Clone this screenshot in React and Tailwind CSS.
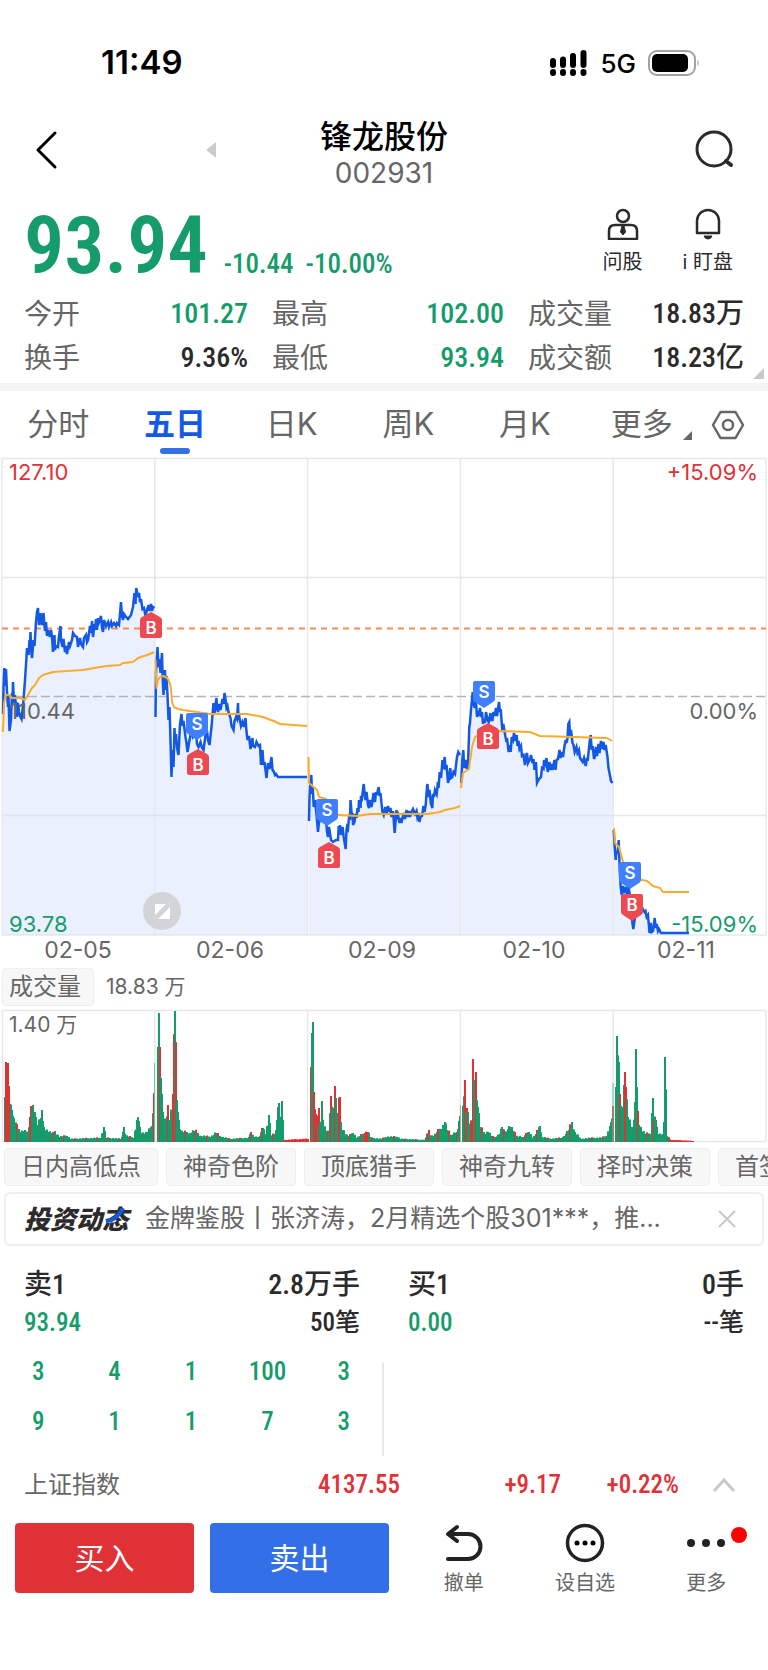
import React from 'react';

const NUM = "font-['Roboto_Condensed','Roboto','Noto_Sans_CJK_SC',sans-serif]";

const stats = [
	{ label: '今开', value: '101.27', color: 'text-[#159c6a]' },
	{ label: '最高', value: '102.00', color: 'text-[#159c6a]' },
	{ label: '成交量', value: '18.83万', color: 'text-[#2b2b2b]' },
	{ label: '换手', value: '9.36%', color: 'text-[#2b2b2b]' },
	{ label: '最低', value: '93.94', color: 'text-[#159c6a]' },
	{ label: '成交额', value: '18.23亿', color: 'text-[#2b2b2b]' },
];

const tabs = ['分时', '五日', '日K', '周K', '月K', '更多'];
const tags = ['日内高低点', '神奇色阶', '顶底猎手', '神奇九转', '择时决策', '首签信号'];
const dates = ['02-05', '02-06', '02-09', '02-10', '02-11'];
const sellQueue = [3, 4, 1, 100, 3, 9, 1, 1, 7, 3];

// one polyline per trading day, flat "x y" pairs
const prices = [
	'3 258 3.5 232 4.3 212 5 230 6 213 7 236 8 251 8.5 240 9.5 275 11 264 12 237 12.5 246 13 226 14 247 15 239 16 252 16.5 246 17 261 18 247 19 256 20 260 21.5 263 22.5 254 23.5 244 25 224 26.3 204 27 192 28.5 199 29.5 184 30 190 30.5 176 31.3 196 32 202 33.5 184 34.5 190 36 166 37 156 38 152 39 169 40.5 157 41 165 42 169 43.5 157 44.5 170 45 175 46 166 47 180 48 174 50 181 51 174 52 181 53 196 54.5 179 55 194 56 190 58 191 59 180 60.5 170 61 184 62.5 191 63.5 183 65 196 66 190 67 198 69 186 70 190 72 184 73 177 75 180 77 181 78 191 80 182 81 188 83 191 84 182 86 179 87 186 88 184 90 170 91 177 92 165 93 181 94.5 168 95 174 96 163 97 174 98 162 99 166 101 160 102 172 103 176 104 164 106 170 108 166 109 171 111 166 112 170 114 167 116 170 117 167 119 169 120 158 121 146 122 160 123 164 124 158 126 161 128 163 131 159 133 151 134.5 137 135.5 148 136.3 132 138 141 139 137 140 146 141 143 142.5 153 144 152 145.5 160 147 154 148.5 149 149.5 155 151 148 152 155 153 151 154.5 152',
	'155.5 261 156 217 157.5 191 158.5 211 159.5 203 160.5 217 162 197 162.5 218 163.5 239 165 214 165.5 234 166.5 220 167.5 239 168.5 264 169.5 251 170.5 284 171.5 321 172.5 294 173.5 311 174.5 272 175 286 176 278 177 292 178.5 299 180 268 181.5 258 182.5 270 183.5 265 185.5 281 186.5 287 187.5 296 189.5 284 191.5 274 193 281 196 277 197 288 198.5 291 200.5 286 202 292 203.5 294 205.5 279 207 275 208 284 209.5 289 211.5 271 213.5 247 214.5 257 216.5 242 217 251 218 256 219.5 248 220.5 254 222.5 243 223.5 248 224.5 237 225.5 243 226.5 252 227.5 250 228.5 256 230.5 262 231.5 270 233.5 274 234.5 265 236 261 237 263 238 247 238.5 264 239.5 262 241 270 242.5 266 244 271 245.5 262 246.5 276 247.5 284 249 280 250.5 293 252.5 282 253 290 255 291 256.5 286 258.5 290 260 289 261 309 262.5 294 263.5 309 264.5 306 266.5 322 268 307 269.5 313 271.5 301 272.5 314 273.5 315 275 319 276 318 278 321 307 321',
	'309 365 309.5 342 310 331 311.3 319 312 338 312.7 330 313.7 351 315 344 316.7 361 318 376 319.5 361 321 366 324 352 326 361 327 376 328 381 329 371 331 384 333 386 336 384 338 384 338.7 370 339.5 376 340 369 341 379 342.5 371 343.7 381 345.7 393 346.5 374 347 371 348 373 349 362 350 364 350.5 344 352 361 352.5 357 353 369 354.5 366 355.5 358 356.5 362 357.5 352 358.5 356 359 344 360.5 352 361 340 362 342 363.7 328 364.5 336 365.5 344 366.5 336 368 349 369 352 370 344 371.5 351 372.5 345 373.5 337 375 346 376 336 376.7 339 378.7 331 379.5 340 380.5 337 381.7 349 382.5 356 383.7 359 385.3 351 386.5 358 388 350 389.5 356 390.5 352 391.5 361 393 355 394.7 377 396.5 354 397 361 398 359 399.5 367 400.5 362 401.5 367 402.7 361 404 357 405 363 406.5 354 407.5 361 409 355 410 361 411.5 356 413 353 415 358 416.5 355 417.5 362 418.5 360 419.5 366 420.5 361 422 360 423.5 350 424.5 356 425.7 349 427 331 427.5 328 428.5 341 429.5 334 431 348 432.3 352 433 338 434 341 435 334 436.7 338 438 326 438.5 332 439.7 316 441 322 442.5 304 443.3 313 444.7 301 445.5 312 446.7 311 448 327 448.7 324 450.3 312 451 322 452.3 321 453.5 316 455 318 457 301 458.3 296 460 299',
	'461.3 327 462.3 304 463.3 294 464 309 464.7 312 466 304 467 313 468 309 469.3 271 470 267 470.7 257 472.7 236 473.7 248 474.7 252 476 246 477 261 478 255 479 260 480 252 481 261 482 256 483 268 484.5 263 485 267 486 256 487.5 264 488.7 266 490.5 257 491 264 492.5 264 493.5 256 494.7 260 496 252 497 260 499 246 500 256 500.7 253 502.3 274 503.3 268 504.3 274 505.5 281 506.5 286 507 282 508.7 296 510 289 510.7 296 511.7 281 513 284 514 277 515 285 516.7 279 517.5 290 518.5 285 519.5 293 521 290 522 300 523.5 299 525 309 526 300 527 297 528 307 530 303 531 299 532.5 307 533.5 303 534.5 314 536 306 537 327 539 323 541 321 542 312 543.5 313 544 304 545.5 308 546.5 302 547.7 316 549.5 306 550.5 314 551.7 308 552.5 314 554.5 304 555.5 314 556.5 304 558 303 559.5 294 560.5 302 561.7 296 563 301 564.5 290 565.7 284 566.5 287 567.5 282 568.3 268 569.3 266 570 280 571 274 572.5 287 573.5 289 574.7 296 576.5 291 577.5 297 579 294 580 302 582.7 306 584 302 585.7 310 587 302 587.7 305 589.5 287 590.7 279 591.7 294 592.7 290 594 303 595 300 596 291 597 300 598.5 288 599.5 297 601 285 602 293 603.5 286 604.5 294 605.7 289 607.5 301 608.5 312 609.5 317 611 325 612.5 327',
	'613.7 374 614.7 391 615.7 404 616.5 395 617.5 398 618.7 384 619.7 414 620.7 431 621.7 439 623 430 624 437 626 431 627 438 628.5 431 630.7 444 632 464 633.3 473 635 461 638 457 641.7 451 644.5 456 645.5 455 646.7 461 648 459 649.5 477 650.7 467 651.7 476 653 475 654.7 462 655.7 472 656.7 468 658 475 659 473 661 477 689 477',
];

const averages = [
	'3 276 4 247 6 239 9 239 12 242 20 242 25 244 28 239 32 232 35 229 39 222 43 219 53 216 67 215 83 214 100 211 107 210 120 209 123 207 133 206 138 202 150 198 154 196',
	'155.5 204 156.5 232 158 224 160 221 163 220 167.5 222 170.5 229 172 246 174 251 178 253 183 254 190 255 210 258 247 258 263 261 268 263 274 265 280 268 307 270',
	'308.5 301 309 327 312.5 330 317 334 319 341 326 343 330 354 339 359 357 360 370 358 427 358 440 356 445 354 455 352 460 350',
	'461 332 463 317 469 313 472 291 475 281 480 278 500 275 530 276 540 280 607 282 612 285',
	'614 372 615 387 619 391 623 406 630 417 642 424 647 425 653 430 660 432 663 436 689 436',
];

// [x, height, red?]
const volumes = [
	[[4, 45], [5, 80, 1], [7, 79, 1], [8, 56, 1], [9, 38, 1], [11, 32], [13, 24], [16, 18, 1], [19, 10], [24, 12], [27, 10], [29, 25, 1], [30, 36, 1], [32, 37], [34, 30], [36, 15], [40, 24], [41, 32], [43, 15], [47, 10], [53, 8], [54, 11], [58, 5], [66, 6], [70, 3], [100, 4], [103, 15], [105, 4], [120, 3], [123, 15], [125, 6], [133, 4], [136, 22], [138, 21], [140, 9], [146, 9], [151, 16], [153, 49, 1]],
	[[157, 95], [158, 129], [159, 95, 1], [160, 64], [162, 30], [165, 18], [167, 37, 1], [169, 18], [172, 48, 1], [174, 131], [175, 100, 1], [176, 42], [178, 22], [180, 10], [189, 9], [194, 11], [200, 6], [210, 5], [215, 9], [220, 5], [230, 3], [247, 4], [250, 10, 1], [253, 5], [258, 5], [262, 14], [265, 8], [268, 27], [270, 6], [274, 8], [278, 39], [280, 13], [281, 41], [283, 2, 1], [307, 3, 1]],
	[[310, 75, 1], [311, 109], [312, 120], [313, 50, 1], [315, 28, 1], [317, 16], [318, 34, 1], [320, 20], [321, 41], [323, 15], [328, 8], [330, 46, 1], [332, 30], [334, 56, 1], [336, 20], [339, 45, 1], [340, 20], [342, 12], [347, 5], [352, 9], [356, 4], [364, 9, 1], [367, 10, 1], [370, 4], [380, 3], [386, 5], [396, 5], [400, 3], [424, 2], [428, 12, 1], [430, 6], [433, 6], [438, 12, 1], [441, 13], [444, 20], [446, 12], [450, 7], [456, 10, 1], [459, 26]],
	[[462, 36], [464, 62, 1], [465, 30], [466, 34, 1], [468, 18], [471, 18, 1], [472, 83, 1], [473, 62], [475, 70, 1], [477, 35], [479, 15], [484, 8], [487, 10], [493, 4], [499, 8], [501, 15], [504, 8], [508, 16], [511, 15], [515, 6], [522, 5], [528, 10], [532, 4], [535, 8], [539, 16], [541, 5], [550, 3], [560, 4], [563, 6], [568, 12], [571, 20], [574, 10], [580, 3], [590, 4], [600, 4], [606, 6], [610, 20], [612, 36, 1]],
	[[615, 55], [616, 106], [618, 80], [619, 48, 1], [621, 26], [623, 57], [624, 70, 1], [625, 55, 1], [627, 25], [632, 13], [634, 40], [635, 93], [637, 31, 1], [639, 15], [644, 8], [650, 8], [652, 44], [653, 22, 1], [655, 22], [657, 8], [662, 8], [663, 20], [664, 85], [666, 6], [670, 2, 1], [692, 1, 1]],
];

function volumeBars(day) {
	const bars = [];
	for (let i = 0; i < day.length - 1; i++) {
		const [x0, h0, red0] = day[i];
		const [x1, h1, red1] = day[i + 1];
		bars.push([x0, h0, red0]);
		for (let x = x0 + 1; x < x1; x++) {
			const noise = ((x * 37) % 11) / 11;
			const h = (h0 + ((h1 - h0) * (x - x0)) / (x1 - x0)) * (0.75 + noise * 0.5);
			bars.push([x, h, (red0 && red1) || noise > 0.85]);
		}
	}
	bars.push(day[day.length - 1]);
	return bars;
}

function Marker({ x, y, type, down }) {
	return (
		<g transform={`translate(${x} ${y})`}>
			<path
				d={down ? 'M-9 0H9Q11 0 11 2V18Q11 20 9 21L0 27L-9 21Q-11 20 -11 18V2Q-11 0 -9 0Z' : 'M0 0L9 5Q11 6 11 8V24Q11 26 9 26H-9Q-11 26 -11 24V8Q-11 6 -9 5Z'}
				fill={type === 'S' ? '#4080ff' : '#ec4a50'}
			/>
			<text x="0" y={down ? 17 : 22} textAnchor="middle" fontSize="17" fontWeight="600" fill="#fff">
				{type}
			</text>
		</g>
	);
}

function PriceChart() {
	return (
		<svg viewBox="0 0 768 508" className="block h-auto w-full">
			{prices.map((line, index) => {
				const points = line.split(' ');
				return (
					<polygon key={index} points={`${points[0]} 479 ${line} ${points[points.length - 2]} 479`} fill="#eaf0fd" />
				);
			})}
			<g stroke="#dcdee3" strokeOpacity="0.7" strokeWidth="1.5" fill="none">
				<path d="M2 2.5H766V479H2Z M2 121.5H766 M2 359.5H766" />
				<path d="M154.8 2V479 M307.6 2V479 M460.4 2V479 M613.2 2V479" />
			</g>
			<path d="M2 240.5H766" stroke="#b4b4b4" strokeWidth="1.5" strokeDasharray="9 4" />
			<path d="M2 172.5H766" stroke="#fa8a52" strokeWidth="2" strokeDasharray="6 5" />
			{prices.map((line, index) => (
				<polyline key={index} points={line} fill="none" stroke="#1459e6" strokeWidth="2.5" />
			))}
			{averages.map((line, index) => (
				<polyline key={index} points={line} fill="none" stroke="#fbab2c" strokeWidth="2" strokeLinejoin="round" />
			))}
			<Marker x={151} y={156} type="B" />
			<Marker x={197} y={257} type="S" down />
			<Marker x={198} y={293} type="B" />
			<Marker x={327} y={343} type="S" down />
			<Marker x={329} y={386} type="B" />
			<Marker x={484} y={225} type="S" down />
			<Marker x={488} y={267} type="B" />
			<Marker x={630} y={406} type="S" down />
			<Marker x={632} y={438} type="B" down />
			<circle cx="162" cy="455" r="19" fill="#d3d4d8" />
			<path d="M155 448H166L155 459Z M170 451V463H158Z" fill="#fff" />
			<g fontSize="22">
				<text x="9" y="24" fill="#e03136">127.10</text>
				<text x="758" y="24" fill="#e03136" textAnchor="end">+15.09%</text>
				<text x="9" y="263" fill="#666">110.44</text>
				<text x="758" y="263" fill="#666" textAnchor="end">0.00%</text>
				<text x="9" y="476" fill="#159c6a">93.78</text>
				<text x="758" y="476" fill="#159c6a" textAnchor="end">-15.09%</text>
			</g>
			<g fontSize="23" fill="#666" textAnchor="middle">
				{dates.map((date, index) => (
					<text key={date} x={78 + index * 152} y="502">{date}</text>
				))}
			</g>
		</svg>
	);
}

function VolumeChart() {
	return (
		<svg viewBox="0 0 768 134" className="block h-auto w-full">
			<path d="M2.5 1.5H766V132.5H2.5Z M154.8 1V133 M307.6 1V133 M460.4 1V133 M613.2 1V133" stroke="#e8e8ea" strokeWidth="1.5" fill="none" />
			{volumes.map((day, index) => (
				<g key={index}>
					{volumeBars(day).map(([x, h, red]) => (
						<rect key={x} x={x} y={133 - h} width={2} height={h} fill={red ? '#e03136' : '#159c6a'} />
					))}
				</g>
			))}
			<path d="M154.5 54V133 M613 74V133" stroke="#6cc4a2" />
			<path d="M460.5 96V133" stroke="#ee9093" />
			<text x="9" y="23" fontSize="21" fill="#666">1.40 万</text>
		</svg>
	);
}

function StatusBar() {
	return (
		<div className="flex h-[104px] items-center justify-between pt-[22px] pr-[68px] pl-[101px]">
			<span className="text-[33px] font-semibold">11:49</span>
			<div className="flex items-center gap-3">
				<svg width="38" height="26" viewBox="0 0 38 26">
					<path d="M3 11V15 M13 9.5V15 M23 6V15 M33.500 3V15 M3 22V23 M13 22V23 M23 22V23 M33.500 22V23" stroke="#000" strokeWidth="6" strokeLinecap="round" />
				</svg>
				<span className="text-[26px] font-medium">5G</span>
				<svg width="52" height="26" viewBox="0 0 52 26">
					<rect x="1" y="1" width="46" height="24" rx="8" fill="none" stroke="#a3a3a3" strokeWidth="2" />
					<rect x="4" y="4" width="36" height="18" rx="5" />
					<path d="M49.500 9.500Q52 13 49.500 16.500Z" fill="#a3a3a3" />
				</svg>
			</div>
		</div>
	);
}

function Header() {
	return (
		<header className="flex h-[88px] items-center justify-between px-8 pt-1">
			<div className="flex flex-1 items-center gap-[147px]">
				<button aria-label="返回" className="pl-[3px]">
					<svg width="24" height="40" viewBox="0 0 24 40" fill="none" stroke="#000" strokeWidth="3">
						<path d="M20 3L3 20L20 37" strokeLinecap="round" strokeLinejoin="round" />
					</svg>
				</button>
				<button aria-label="上一只">
					<svg width="10" height="16" viewBox="0 0 10 16">
						<path d="M10 0V16L0 8Z" fill="#ccc" />
					</svg>
				</button>
			</div>
			<div className="pt-2 text-center">
				<h1 className="text-[32px] leading-[38px] font-medium">锋龙股份</h1>
				<p className="text-[28px] leading-[34px] text-[#666]">002931</p>
			</div>
			<div className="flex flex-1 justify-end">
				<button aria-label="搜索">
					<svg width="42" height="40" viewBox="0 0 42 40" fill="none" stroke="#2b2b2b" strokeWidth="3">
						<circle cx="20" cy="19" r="17" />
						<path d="M32 31L37 35" strokeWidth="4" strokeLinecap="round" />
					</svg>
				</button>
			</div>
		</header>
	);
}

function Quote() {
	return (
		<section className="relative border-b-8 border-[#f3f3f3] px-6 pt-3 pb-[3px]">
			<div className="flex h-[84px] justify-between">
				<div className={`${NUM} flex items-baseline gap-4 font-semibold text-[#159c6a]`}>
					<span className="text-[80px] leading-[84px]">93.94</span>
					<span className="flex gap-3 text-[27px] font-medium">
						<span>-10.44</span>
						<span>-10.00%</span>
					</span>
				</div>
				<div className="flex gap-10 pr-[11px] text-[20px] leading-[28px] text-[#2b2b2b]">
					<button className="flex flex-col items-center gap-2 pt-1">
						<svg width="32" height="32" viewBox="0 0 32 32" fill="none" stroke="#2b2b2b" strokeWidth="2.500">
							<circle cx="16" cy="8" r="6" />
							<path d="M8 17H24Q30 17 30 23V31H2V23Q2 17 8 17Z" strokeLinejoin="round" />
							<path d="M15 18H17L18.500 24L16 27L13.500 24Z" fill="#2b2b2b" strokeWidth="1" />
						</svg>
						问股
					</button>
					<button className="flex flex-col items-center gap-2 pt-1">
						<svg width="32" height="32" viewBox="0 0 32 32" fill="none" stroke="#2b2b2b" strokeWidth="2.500">
							<path d="M5 25V13A11 11 0 0 1 27 13V25Z" strokeLinejoin="round" />
							<path d="M12 28H20Q19 31 16 31Q13 31 12 28Z" fill="#2b2b2b" strokeWidth="1" />
						</svg>
						i 盯盘
					</button>
				</div>
			</div>
			<dl className="grid grid-cols-[224fr_232fr_216fr] gap-x-6 pt-1">
				{stats.map((stat) => (
					<div key={stat.label} className="flex h-[44px] items-center justify-between">
						<dt className="text-[28px] text-[#666]">{stat.label}</dt>
						<dd className={`${NUM} text-[28px] font-medium ${stat.color}`}>{stat.value}</dd>
					</div>
				))}
			</dl>
			<svg className="absolute right-1 bottom-1" width="11" height="11" viewBox="0 0 11 11">
				<path d="M11 0V11H0Z" fill="#c8c8c8" />
			</svg>
		</section>
	);
}

function PeriodTabs() {
	return (
		<nav className="flex h-[65px] items-center">
			<div className="grid flex-1 grid-cols-6">
				{tabs.map((tab) => (
					<button
						key={tab}
						className={
							tab === '五日'
								? 'relative h-[65px] pt-[2px] text-[31px] font-bold text-[#1459e6]'
								: 'relative h-[65px] pt-[2px] text-[31px] text-[#666]'
						}
					>
						{tab}
						{tab === '五日' && <span className="absolute bottom-[2px] left-1/2 h-[6px] w-[30px] -translate-x-1/2 rounded-full bg-[#3370e8]" />}
						{tab === '更多' && (
							<svg className="absolute right-2 bottom-4" width="9" height="9" viewBox="0 0 9 9">
								<path d="M9 0V9H0Z" fill="#666" />
							</svg>
						)}
					</button>
				))}
			</div>
			<button aria-label="设置" className="mr-3 flex w-14 justify-center pt-[2px]">
				<svg width="34" height="30" viewBox="0 0 34 30" fill="none" stroke="#666" strokeWidth="2.500">
					<path d="M9.500 2H24.500L32 15L24.500 28H9.500L2 15Z" strokeLinejoin="round" />
					<circle cx="17" cy="15" r="5" />
				</svg>
			</button>
		</nav>
	);
}

function Notice() {
	return (
		<div className="mx-1 mt-[6px] flex h-[54px] items-center rounded-md border-2 border-[#eee] pr-[26px] pl-[18px] text-[#666]">
			<span className="relative text-[26px] font-black text-[#2b2b2b] italic">
				投资动态
				<svg className="absolute top-2 -right-1" width="28" height="16" viewBox="0 0 28 16" fill="none" stroke="#1459e6" strokeWidth="4">
					<path d="M19 0Q12 13 2 13" />
				</svg>
			</span>
			<a href="#notice" className="ml-[17px] flex-1 truncate text-[25px]">
				金牌鉴股丨张济涛，2月精选个股301***，推...
			</a>
			<button aria-label="关闭">
				<svg width="18" height="18" viewBox="0 0 18 18" stroke="#c8c8c8" strokeWidth="2">
					<path d="M1 1L17 17M17 1L1 17" />
				</svg>
			</button>
		</div>
	);
}

function Side({ label, amount, price, count }) {
	return (
		<div className={`${NUM} font-medium text-[#2b2b2b]`}>
			<div className="flex h-10 items-center justify-between text-[28px]">
				<span>{label}</span>
				<span>{amount}</span>
			</div>
			<div className="flex h-9 items-center justify-between text-[25px]">
				<span className="text-[#159c6a]">{price}</span>
				<span>{count}</span>
			</div>
		</div>
	);
}

function OrderBook() {
	return (
		<section className="pt-[19px]">
			<div className="grid grid-cols-2 gap-12 px-6">
				<Side label="卖1" amount="2.8万手" price="93.94" count="50笔" />
				<Side label="买1" amount="0手" price="0.00" count="--笔" />
			</div>
			<div className="mt-[22px] grid grid-cols-2">
				<div className={`${NUM} grid h-[93px] grid-cols-5 border-r-2 border-[#e8e8e8] text-center text-[25px] font-medium text-[#159c6a]`}>
					{sellQueue.map((n, index) => (
						<span key={index} className="h-[50px] leading-[18px]">{n}</span>
					))}
				</div>
			</div>
		</section>
	);
}

function IndexRow() {
	return (
		<div className="flex h-[58px] items-center px-6 text-[#e03136]">
			<span className="flex-1 text-[24px] text-[#666]">上证指数</span>
			<div className={`${NUM} flex items-center text-[25px] font-medium`}>
				<span>4137.55</span>
				<span className="w-[161px] text-right">+9.17</span>
				<span className="w-[118px] text-right">+0.22%</span>
			</div>
			<svg className="mr-2 ml-[33px]" width="24" height="14" viewBox="0 0 24 14" fill="none" stroke="#c8c8c8" strokeWidth="3">
				<path d="M2 13L12 2L22 13" />
			</svg>
		</div>
	);
}

function Actions() {
	return (
		<footer className="grid grid-cols-[374fr_364fr] gap-x-[14px] pt-[9px] pr-px pb-[76px] pl-[15px] text-[20px] leading-[20px] text-[#666]">
			<div className="grid grid-cols-2 gap-4 text-[30px] text-white">
				<button className="h-[70px] rounded bg-[#e03136]">买入</button>
				<button className="h-[70px] rounded bg-[#3370e8]">卖出</button>
			</div>
			<div className="grid grid-cols-3">
				<button className="flex flex-col items-center justify-between">
					<svg width="40" height="40" viewBox="0 0 40 40" fill="none" stroke="#222" strokeWidth="4" strokeLinecap="round" strokeLinejoin="round">
						<path d="M13 4L4 11L13 18M5 11H24A12.500 12.500 0 0 1 24 36H4" />
					</svg>
					撤单
				</button>
				<button className="flex flex-col items-center justify-between">
					<svg width="40" height="40" viewBox="0 0 40 40">
						<circle cx="20" cy="20" r="17.500" fill="none" stroke="#222" strokeWidth="3.500" />
						<circle cx="12" cy="20" r="2.500" />
						<circle cx="20" cy="20" r="2.500" />
						<circle cx="28" cy="20" r="2.500" />
					</svg>
					设自选
				</button>
				<button className="relative flex flex-col items-center justify-between">
					<svg width="40" height="40" viewBox="0 0 40 40" fill="#222">
						<circle cx="5" cy="20" r="4" />
						<circle cx="20" cy="20" r="4" />
						<circle cx="35" cy="20" r="4" />
					</svg>
					更多
					<span className="absolute top-1 right-5 size-4 rounded-full bg-[#ff0000]" />
				</button>
			</div>
		</footer>
	);
}

export default function App() {
	return (
		<div className="w-full overflow-hidden bg-white font-['Inter','Noto_Sans_CJK_SC',sans-serif] text-black">
			<StatusBar />
			<Header />
			<Quote />
			<PeriodTabs />
			<PriceChart />
			<div className="flex h-[45px] items-center gap-3 pt-px pl-[2px] text-[#666]">
				<button className="h-[38px] rounded border border-[#eee] bg-[#f7f7f7] pr-3 pl-[6px] text-[24px] leading-[36px]">成交量</button>
				<span className="text-[21px]">18.83 万</span>
			</div>
			<VolumeChart />
			<div className="mt-[5px] flex gap-2 overflow-hidden pl-1">
				{tags.map((tag) => (
					<button key={tag} className="h-[38px] shrink-0 rounded border border-[#eee] bg-[#f7f7f7] px-4 text-[24px] leading-[36px] text-[#666]">
						{tag}
					</button>
				))}
			</div>
			<Notice />
			<OrderBook />
			<IndexRow />
			<Actions />
		</div>
	);
}
